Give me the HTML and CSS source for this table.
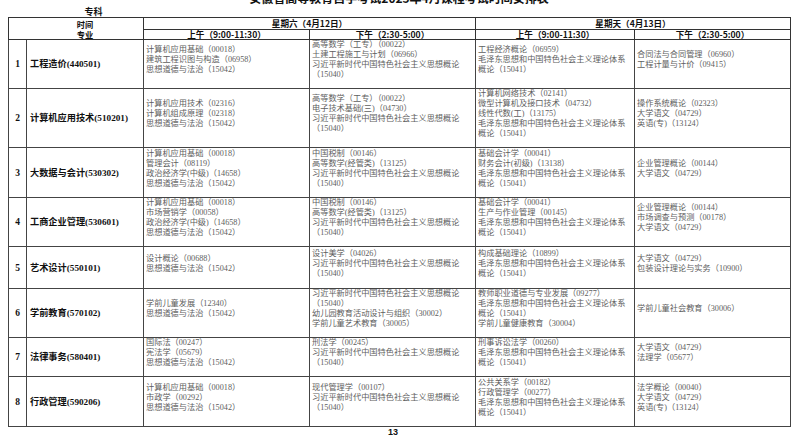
FILE: index.html
```html
<!DOCTYPE html>
<html lang="zh-CN">
<head>
<meta charset="utf-8">
<title>安徽省高等教育自学考试2025年4月课程考试时间安排表</title>
<link rel="stylesheet" href="styles.css">
</head>
<body>
<div class="page">
  <div class="title">安徽省高等教育自学考试2025年4月课程考试时间安排表</div>
  <div class="kind">专科</div>
  <table class="sched">
    <colgroup>
      <col class="c-no"><col class="c-major"><col class="c-sa"><col class="c-sp"><col class="c-ua"><col class="c-up">
    </colgroup>
    <thead>
      <tr class="h1">
        <th colspan="2" rowspan="2" class="corner"><span>时间</span><span>专业</span></th>
        <th colspan="2">星期六（4月12日）</th>
        <th colspan="2">星期天（4月13日）</th>
      </tr>
      <tr class="h2">
        <th>上午（9:00-11:30）</th>
        <th>下午（2:30-5:00）</th>
        <th>上午（9:00-11:30）</th>
        <th>下午（2:30-5:00）</th>
      </tr>
    </thead>
    <tbody>
      <tr>
        <td class="no">1</td>
        <td class="major">工程造价(440501)</td>
        <td>计算机应用基础（00018）<br>建筑工程识图与构造（06958）<br>思想道德与法治（15042）</td>
        <td>高等数学（工专）（00022）<br>土建工程施工与计划（06966）<br>习近平新时代中国特色社会主义思想概论<br>（15040）</td>
        <td>工程经济概论（06959）<br>毛泽东思想和中国特色社会主义理论体系<br>概论（15041）</td>
        <td>合同法与合同管理（06960）<br>工程计量与计价（09415）</td>
      </tr>
      <tr>
        <td class="no">2</td>
        <td class="major">计算机应用技术(510201)</td>
        <td>计算机应用技术（02316）<br>计算机组成原理（02318）<br>思想道德与法治（15042）</td>
        <td>高等数学（工专）（00022）<br>电子技术基础(三)（04730）<br>习近平新时代中国特色社会主义思想概论<br>（15040）</td>
        <td>计算机网络技术（02141）<br>微型计算机及接口技术（04732）<br>线性代数(工)（13175）<br>毛泽东思想和中国特色社会主义理论体系<br>概论（15041）</td>
        <td>操作系统概论（02323）<br>大学语文（04729）<br>英语(专)（13124）</td>
      </tr>
      <tr>
        <td class="no">3</td>
        <td class="major">大数据与会计(530302)</td>
        <td>计算机应用基础（00018）<br>管理会计（08119）<br>政治经济学(中级)（14658）<br>思想道德与法治（15042）</td>
        <td>中国税制（00146）<br>高等数学(经管类)（13125）<br>习近平新时代中国特色社会主义思想概论<br>（15040）</td>
        <td>基础会计学（00041）<br>财务会计(初级)（13138）<br>毛泽东思想和中国特色社会主义理论体系<br>概论（15041）</td>
        <td>企业管理概论（00144）<br>大学语文（04729）</td>
      </tr>
      <tr>
        <td class="no">4</td>
        <td class="major">工商企业管理(530601)</td>
        <td>计算机应用基础（00018）<br>市场营销学（00058）<br>政治经济学(中级)（14658）<br>思想道德与法治（15042）</td>
        <td>中国税制（00146）<br>高等数学(经管类)（13125）<br>习近平新时代中国特色社会主义思想概论<br>（15040）</td>
        <td>基础会计学（00041）<br>生产与作业管理（00145）<br>毛泽东思想和中国特色社会主义理论体系<br>概论（15041）</td>
        <td>企业管理概论（00144）<br>市场调查与预测（00178）<br>大学语文（04729）</td>
      </tr>
      <tr>
        <td class="no">5</td>
        <td class="major">艺术设计(550101)</td>
        <td>设计概论（00688）<br>思想道德与法治（15042）</td>
        <td>设计美学（04026）<br>习近平新时代中国特色社会主义思想概论<br>（15040）</td>
        <td>构成基础理论（10899）<br>毛泽东思想和中国特色社会主义理论体系<br>概论（15041）</td>
        <td>大学语文（04729）<br>包装设计理论与实务（10900）</td>
      </tr>
      <tr>
        <td class="no">6</td>
        <td class="major">学前教育(570102)</td>
        <td>学前儿童发展（12340）<br>思想道德与法治（15042）</td>
        <td>习近平新时代中国特色社会主义思想概论<br>（15040）<br>幼儿园教育活动设计与组织（30002）<br>学前儿童艺术教育（30005）</td>
        <td>教师职业道德与专业发展（09277）<br>毛泽东思想和中国特色社会主义理论体系<br>概论（15041）<br>学前儿童健康教育（30004）</td>
        <td>学前儿童社会教育（30006）</td>
      </tr>
      <tr>
        <td class="no">7</td>
        <td class="major">法律事务(580401)</td>
        <td>国际法（00247）<br>宪法学（05679）<br>思想道德与法治（15042）</td>
        <td>刑法学（00245）<br>习近平新时代中国特色社会主义思想概论<br>（15040）</td>
        <td>刑事诉讼法学（00260）<br>毛泽东思想和中国特色社会主义理论体系<br>概论（15041）</td>
        <td>大学语文（04729）<br>法理学（05677）</td>
      </tr>
      <tr>
        <td class="no">8</td>
        <td class="major">行政管理(590206)</td>
        <td>计算机应用基础（00018）<br>市政学（00292）<br>思想道德与法治（15042）</td>
        <td>现代管理学（00107）<br>习近平新时代中国特色社会主义思想概论<br>（15040）</td>
        <td>公共关系学（00182）<br>行政管理学（00277）<br>毛泽东思想和中国特色社会主义理论体系<br>概论（15041）</td>
        <td>法学概论（00040）<br>大学语文（04729）<br>英语(专)（13124）</td>
      </tr>
    </tbody>
  </table>
  <div class="pageno">13</div>
</div>
</body>
</html>
```

FILE: styles.css
```css
html, body {
  margin: 0;
  padding: 0;
  background: #ffffff;
}

body {
  font-family: "Liberation Serif", "Noto Sans CJK SC", serif;
  color: #111;
  overflow: hidden;
  width: 800px;
  height: 437px;
}

.page {
  width: 782px;
  padding-left: 8px;
}

.title {
  font-family: "Noto Sans CJK SC", sans-serif;
  font-weight: 700;
  font-size: 12px;
  line-height: 14px;
  height: 14px;
  margin-top: -9px;
  text-align: center;
  color: #111;
}

.kind {
  font-family: "Noto Sans CJK SC", sans-serif;
  font-weight: 700;
  font-size: 9px;
  line-height: 10px;
  height: 10px;
  margin-top: 2px;
  padding-left: 18px;
  width: 135px;
  text-align: center;
  position: relative;
  z-index: 1;
}

.sched {
  border-collapse: collapse;
  table-layout: fixed;
  width: 782px;
  border: 1px solid #333;
}

.c-no { width: 18px; }
.c-major { width: 117px; }
.c-sa { width: 166px; }
.c-sp { width: 166px; }
.c-ua { width: 159px; }
.c-up { width: 156px; }

.sched th {
  font-family: "Noto Sans CJK SC", sans-serif;
  font-weight: 700;
  font-size: 8.6px;
  line-height: 9px;
  color: #111;
  border: 1px solid #333;
  padding: 0;
  text-align: center;
  vertical-align: middle;
  white-space: nowrap;
  overflow: hidden;
}

.sched .h1 th { height: 10px; }
.sched .h2 th { height: 9px; }

.sched th.corner {
  padding: 1px 0 0 18px;
  vertical-align: top;
}

.corner span {
  display: block;
  font-size: 8.2px;
  line-height: 10px;
  height: 10px;
}

.sched td {
  border: 1px solid #444;
  padding: 0 2px 8px 2px;
  font-size: 8.2px;
  line-height: 10px;
  color: #5e5e5e;
  vertical-align: middle;
  white-space: nowrap;
  overflow: hidden;
}

.sched td.no {
  font-family: "Liberation Serif", serif;
  font-weight: 700;
  font-size: 9.5px;
  color: #111;
  text-align: center;
  padding: 0;
}

.sched td.major {
  font-family: "Liberation Serif", "Noto Sans CJK SC", serif;
  font-weight: 700;
  font-size: 9.2px;
  color: #111;
  padding: 0 0 0 3px;
}

.sched tbody tr:nth-child(1) td { height: 40px; }
.sched tbody tr:nth-child(2) td { height: 49px; }
.sched tbody tr:nth-child(3) td { height: 41px; }
.sched tbody tr:nth-child(4) td { height: 40px; }
.sched tbody tr:nth-child(5) td { height: 33px; }
.sched tbody tr:nth-child(6) td { height: 38px; }
.sched tbody tr:nth-child(7) td { height: 30px; }
.sched tbody tr:nth-child(8) td { height: 41px; }

.sched tbody td.no,
.sched tbody td.major { padding-bottom: 0; }
.sched tbody tr:nth-child(1) td.no, .sched tbody tr:nth-child(1) td.major { height: 48px; }
.sched tbody tr:nth-child(2) td.no, .sched tbody tr:nth-child(2) td.major { height: 57px; }
.sched tbody tr:nth-child(3) td.no, .sched tbody tr:nth-child(3) td.major { height: 49px; }
.sched tbody tr:nth-child(4) td.no, .sched tbody tr:nth-child(4) td.major { height: 48px; }
.sched tbody tr:nth-child(5) td.no, .sched tbody tr:nth-child(5) td.major { height: 41px; }
.sched tbody tr:nth-child(6) td.no, .sched tbody tr:nth-child(6) td.major { height: 46px; }
.sched tbody tr:nth-child(7) td.no, .sched tbody tr:nth-child(7) td.major { height: 38px; }
.sched tbody tr:nth-child(8) td.no, .sched tbody tr:nth-child(8) td.major { height: 49px; }

.pageno {
  font-family: "Liberation Sans", sans-serif;
  font-weight: 700;
  font-size: 9px;
  line-height: 10px;
  text-align: center;
  padding-right: 12px;
  color: #111;
}
```
